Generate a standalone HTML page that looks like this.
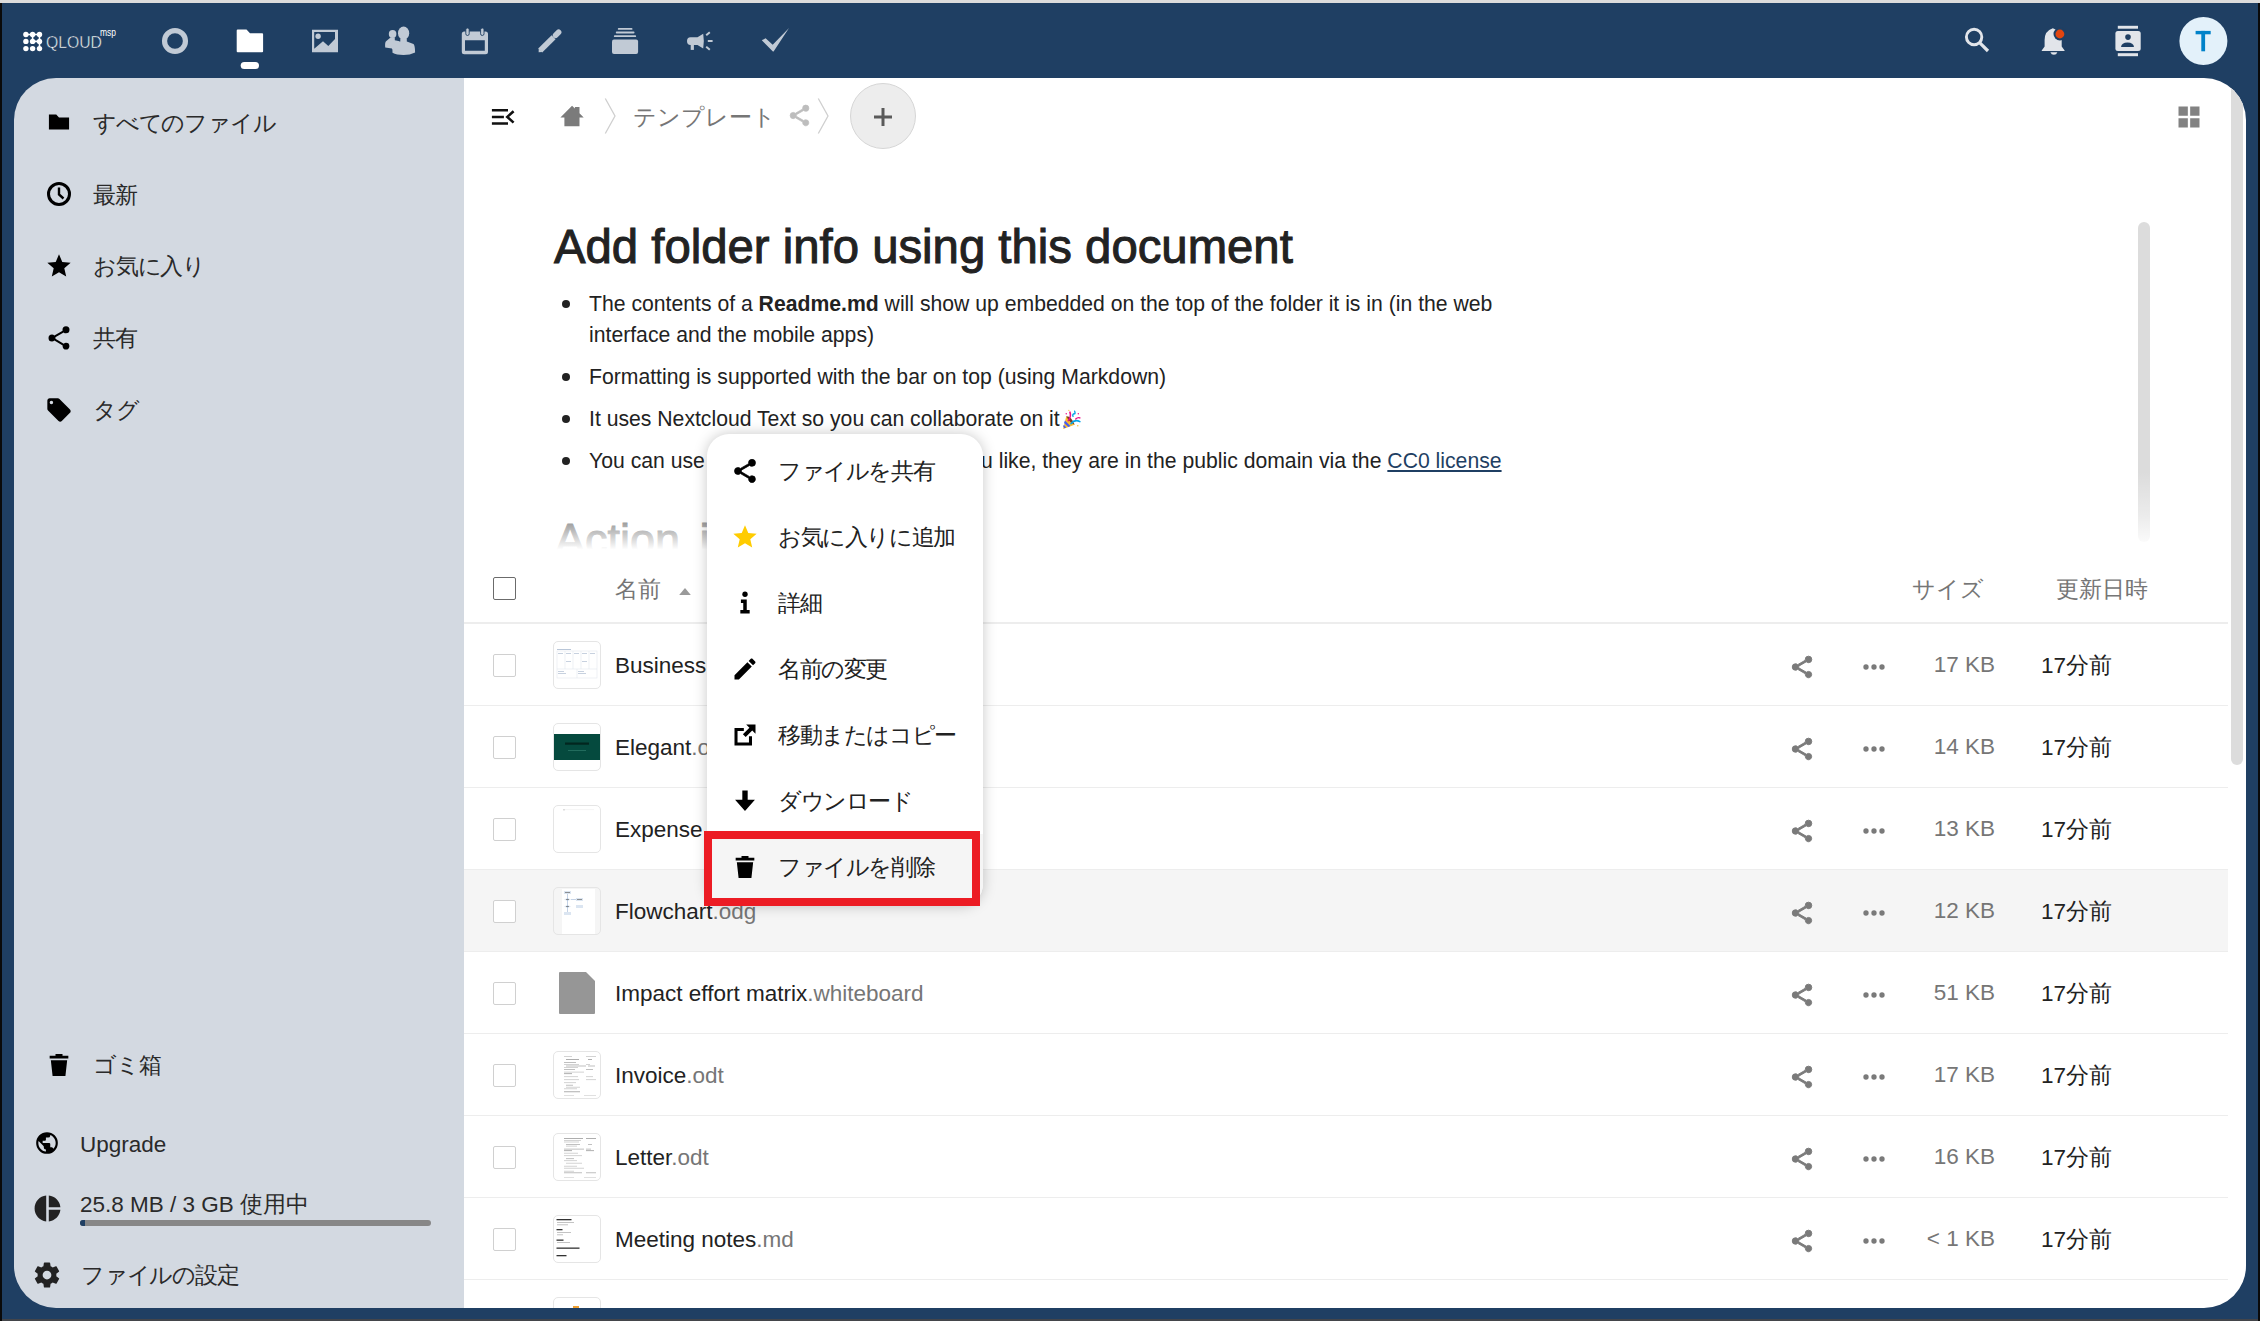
<!DOCTYPE html>
<html><head><meta charset="utf-8">
<style>
*{box-sizing:border-box;margin:0;padding:0}
html,body{width:2260px;height:1321px;overflow:hidden}
body{position:relative;background:#1f3f63;font-family:"Liberation Sans",sans-serif;color:#222}
.abs{position:absolute}
#topb{left:0;top:0;width:2260px;height:3px;background:#dcdcdc}
#leftb{left:0;top:3px;width:2px;height:1318px;background:#0a0a0a}
#rightb{left:2258px;top:3px;width:2px;height:1318px;background:#0a0a0a}
#botb{left:2px;top:1319px;width:2256px;height:2px;background:#43454a}
#side{left:14px;top:78px;width:450px;height:1230px;background:#d3d9e1;border-radius:42px 0 0 42px}
#main{left:464px;top:78px;width:1782px;height:1230px;background:#fff;border-radius:0 42px 42px 0;overflow:hidden}
.hic{position:absolute;top:26px;width:30px;height:30px}
.hic svg{width:30px;height:30px;fill:#c5cdd7}
svg{display:block}
.sitem{position:absolute;left:0;height:40px;width:450px}
.sitem svg{position:absolute;left:31px;top:6px;width:28px;height:28px;fill:#000}
.sitem span{position:absolute;left:79px;top:4.5px;font-size:22.5px;color:#2a2a2a;white-space:nowrap;letter-spacing:-1.2px}
.row{position:absolute;left:0;width:1764px;height:82px;border-top:1px solid #ededed}
.cb{position:absolute;left:29px;top:30px;width:23px;height:23px;border:1.5px solid #d0d0d0;border-radius:2px;background:#fff}
.thumb{position:absolute;left:89px;top:17px;width:48px;height:48px;border:1px solid #e5e5e5;border-radius:5px;background:#fff;overflow:hidden}
.fname{position:absolute;left:151px;top:29px;font-size:22.5px;color:#222;white-space:nowrap}
.ext{color:#767676}
.rshare{position:absolute;left:1325px;top:30px;width:26px;height:26px;fill:#7a7a7a;stroke:#7a7a7a;stroke-width:0.9}
.rdots{position:absolute;left:1394px;top:27px;width:32px;height:32px;fill:#7a7a7a}
.size{position:absolute;right:233px;top:28px;font-size:22.5px;color:#767676;white-space:nowrap}
.date{position:absolute;left:1577px;top:26px;font-size:22.5px;color:#222;white-space:nowrap}
.bul{position:absolute;left:125px;font-size:21.2px;color:#222;white-space:nowrap}
.dot{position:absolute;left:-27px;top:8px;width:8px;height:8px;border-radius:50%;background:#222}
.mi{position:absolute;left:0;width:277px;height:66px}
.mi svg{position:absolute;left:23.5px;top:19px;width:28px;height:28px;fill:#000}
.mi span{position:absolute;left:71px;top:17.5px;font-size:22.5px;color:#222;white-space:nowrap;letter-spacing:-1.4px}
</style></head><body>
<div id="topb" class="abs"></div>
<div id="leftb" class="abs"></div>
<div id="rightb" class="abs"></div>
<div id="botb" class="abs"></div>

<!-- header -->
<svg class="abs" style="left:0;top:0" width="2260" height="78" viewBox="0 0 2260 78">
<g fill="#fff">
<circle cx="25.9" cy="34.5" r="2.7"/><circle cx="32.6" cy="34.5" r="2.7"/><circle cx="39.5" cy="34.5" r="2.7"/>
<circle cx="25.9" cy="41.4" r="2.7"/><circle cx="32.6" cy="41.4" r="2.7"/><circle cx="39.5" cy="41.4" r="2.7"/>
<circle cx="25.9" cy="48.6" r="2.7"/><circle cx="32.6" cy="48.6" r="2.7"/><circle cx="39.5" cy="48.6" r="2.7"/>
</g>
<path d="M25.9 34.5H39.5V48.6M32.6 34.5V41.4H39.5" stroke="#fff" stroke-width="1.6" fill="none"/>
<text x="46" y="47.7" font-family="Liberation Sans" font-size="16.8" fill="#fff" stroke="#1f3f63" stroke-width="0.5" textLength="56" lengthAdjust="spacingAndGlyphs">QLOUD</text>
<text x="100" y="36" font-family="Liberation Sans" font-size="10" fill="#fff" textLength="16" lengthAdjust="spacingAndGlyphs">msp</text>

<circle cx="175" cy="41" r="10.45" fill="none" stroke="#c1cad5" stroke-width="5.2"/>

<path d="M237.7 29.6H246.5L250 33.3H262.1Q263.1 33.3 263.1 34.3V51.3Q263.1 52.3 262.1 52.3H237.7Q236.7 52.3 236.7 51.3V30.6Q236.7 29.6 237.7 29.6Z" fill="#fff"/>
<rect x="240.7" y="62" width="18.3" height="7.1" rx="3.55" fill="#fff"/>

<path d="M312 29.7H338V52.3H312Z M314.2 31.9V48.8L323 41.2L328.3 46.1L335 39V31.9Z" fill="#c1cad5" fill-rule="evenodd"/>
<circle cx="318.1" cy="36.2" r="2.7" fill="#c1cad5"/>

<g fill="#c1cad5">
<ellipse cx="392.6" cy="34" rx="3.8" ry="3.9"/>
<path d="M390.5 37.5H394.8V40.2L399.5 41.2L398 49.3H391.9L392 48.5L385.2 47.5Q384.8 43 385.8 41.6Z"/>
<ellipse cx="403.6" cy="33.2" rx="5.6" ry="6.6"/>
<path d="M400.3 38.5H406.8L406.8 41.6L413.5 44Q415 45 415.1 52.5Q410 55 403.5 55Q396.5 55 392.5 52.8L392.3 45Q393.3 42.5 400.3 41.6Z"/>
</g>

<path d="M464.3 31.6H485.5Q488 31.6 488 34.1V51.8Q488 54.3 485.5 54.3H464.3Q461.8 54.3 461.8 51.8V34.1Q461.8 31.6 464.3 31.6Z M465 40.2V50.7H484.8V40.2Z" fill="#c1cad5" fill-rule="evenodd"/>
<rect x="465.8" y="28" width="3.4" height="7.5" rx="1.7" fill="#c1cad5" stroke="#1f3f63" stroke-width="0.9"/>
<rect x="480.6" y="28" width="3.4" height="7.5" rx="1.7" fill="#c1cad5" stroke="#1f3f63" stroke-width="0.9"/>

<path d="M540.2 50.6L553.6 37.2" stroke="#c1cad5" stroke-width="5.6" stroke-linecap="butt"/>
<path d="M538.6 52.3L538.8 48.4L542.4 52.1Z" fill="#c1cad5"/>
<path d="M555.6 35.3L558.6 32.3" stroke="#c1cad5" stroke-width="5.6" stroke-linecap="round"/>

<g fill="#c1cad5">
<rect x="617.8" y="28" width="14.7" height="1.8" rx="0.9"/>
<rect x="615.8" y="31.6" width="18.7" height="1.9" rx="0.9"/>
<rect x="613.9" y="35.2" width="22.2" height="1.9" rx="0.9"/>
<rect x="612" y="39.5" width="26.1" height="14.5" rx="2"/>
</g>

<g fill="#c1cad5">
<path d="M690.5 37.2L697.5 37.2L703.2 33.7Q704.5 41 703.2 48.5L697.5 45L690.5 45Q687 45 687 41.1Q687 37.2 690.5 37.2Z"/>
<rect x="690.7" y="44" width="3.2" height="5.9"/>
</g>
<path d="M706.2 35.3L709.8 32.3M707.8 41H712.6M706.2 46.8L709.8 49.8" stroke="#c1cad5" stroke-width="2" stroke-linecap="butt"/>

<path d="M761.8 40.3L765.6 38.2L772.7 44.8L789 28.1L773.6 51.4L772.9 51.4Z" fill="#c1cad5"/>

<circle cx="1974.1" cy="37" r="7.7" fill="none" stroke="#e2e5ea" stroke-width="2.9"/>
<path d="M1979.6 42.6L1988 51" stroke="#e2e5ea" stroke-width="3.2"/>

<path d="M2052.8 28.3Q2044.6 31 2044.6 40V46.5L2041.7 50.5V51.1H2064.6V50.5L2061.7 46.5V40Q2061.7 31 2052.8 28.3Z" fill="#e2e5ea"/>
<path d="M2050.4 52.2H2057.4Q2056.5 54.8 2053.9 54.8Q2051.3 54.8 2050.4 52.2Z" fill="#e2e5ea"/>
<circle cx="2059.9" cy="34" r="6.4" fill="#1f3f63"/>
<circle cx="2059.9" cy="34" r="4.4" fill="#e2450f"/>

<rect x="2117.8" y="25.8" width="20.2" height="2.9" fill="#e2e5ea"/>
<rect x="2117.8" y="53.2" width="20.2" height="3" fill="#e2e5ea"/>
<rect x="2115.4" y="30.9" width="25.3" height="20.2" rx="2.5" fill="#e2e5ea"/>
<circle cx="2128" cy="37.1" r="2.8" fill="#1f3f63"/>
<path d="M2121 46.9Q2121.5 42.4 2127.5 42.4Q2133.5 42.4 2134 46.9Z" fill="#1f3f63"/>

<circle cx="2203.4" cy="41" r="24" fill="#e3f1fa"/>
<rect x="2195.6" y="30.9" width="15.1" height="3.4" fill="#0082c9"/>
<rect x="2201.3" y="30.9" width="3.8" height="20.4" fill="#0082c9"/>
</svg>

<div id="side" class="abs">
<div class="sitem" style="top:25px"><svg viewBox="0 0 24 24" style="left:34px;top:9.5px;width:22px;height:18px" preserveAspectRatio="none"><path d="M9,2H1V22H23V6H12L9,2Z"/></svg><span>すべてのファイル</span></div>
<div class="sitem" style="top:97px"><svg viewBox="0 0 28 28" style="left:30.7px;top:5.4px;width:28px;height:28px"><circle cx="14" cy="14" r="10.5" fill="none" stroke="#000" stroke-width="3"/><path d="M14 7.5V14.5L18.5 18.5" stroke="#000" stroke-width="2.4" fill="none"/></svg><span>最新</span></div>
<div class="sitem" style="top:168px"><svg viewBox="0 0 24 24"><path d="M12,17.27L18.18,21L16.54,13.97L22,9.24L14.81,8.62L12,2L9.19,8.62L2,9.24L7.45,13.97L5.82,21L12,17.27Z"/></svg><span>お気に入り</span></div>
<div class="sitem" style="top:240px"><svg viewBox="0 0 24 24"><path d="M18,16.08C17.24,16.08 16.56,16.38 16.04,16.85L8.91,12.7C8.96,12.47 9,12.24 9,12C9,11.76 8.96,11.53 8.91,11.3L15.96,7.19C16.5,7.69 17.21,8 18,8A3,3 0 0,0 21,5A3,3 0 0,0 18,2A3,3 0 0,0 15,5C15,5.24 15.04,5.47 15.09,5.7L8.04,9.81C7.5,9.31 6.79,9 6,9A3,3 0 0,0 3,12A3,3 0 0,0 6,15C6.79,15 7.5,14.69 8.04,14.19L15.16,18.34C15.11,18.550 15.08,18.77 15.08,19C15.08,20.61 16.39,21.91 18,21.910C19.61,21.91 20.92,20.61 20.92,19A2.92,2.92 0 0,0 18,16.08Z"/></svg><span>共有</span></div>
<div class="sitem" style="top:312px"><svg viewBox="0 0 24 24"><path d="M5.5,7A1.5,1.5 0 0,1 4,5.5A1.5,1.5 0 0,1 5.5,4A1.5,1.5 0 0,1 7,5.5A1.5,1.5 0 0,1 5.5,7M21.41,11.58L12.41,2.58C12.05,2.22 11.55,2 11,2H4C2.89,2 2,2.89 2,4V11C2,11.55 2.22,12.05 2.59,12.410L11.58,21.41C11.95,21.77 12.45,22 13,22C13.55,22 14.05,21.77 14.41,21.41L21.41,14.41C21.78,14.05 22,13.55 22,13C22,12.44 21.77,11.94 21.41,11.58Z"/></svg><span>タグ</span></div>

<div class="sitem" style="top:967px"><svg viewBox="0 0 24 24"><path d="M9,2.5H15V4H20V6.5H4V4H9Z M5,8H19L17.5,21.5H6.5Z"/></svg><span>ゴミ箱</span></div>
<div class="sitem" style="top:1049px"><svg viewBox="0 0 24 24" style="left:20px;top:3px;width:26px;height:26px"><path d="M17.9,17.39C17.64,16.59 16.89,16 16,16H15V13A1,1 0 0,0 14,12H8V10H10A1,1 0 0,0 11,9V7H13A2,2 0 0,0 15,5V4.59C17.93,5.77 20,8.64 20,12C20,14.08 19.2,15.97 17.9,17.39M11,19.93C7.05,19.440 4,16.08 4,12C4,11.38 4.08,10.78 4.21,10.21L9,15V16A2,2 0 0,0 11,18M12,2A10,10 0 0,0 2,12A10,10 0 0,0 12,22A10,10 0 0,0 22,12A10,10 0 0,0 12,2Z"/></svg><span style="left:66px;letter-spacing:0">Upgrade</span></div>
<div class="sitem" style="top:1110px"><svg viewBox="0 0 24 24" style="left:17.5px;top:4.5px;width:31px;height:31px;fill:#222"><path d="M11,2V22C5.9,21.5 2,17.2 2,12C2,6.8 5.9,2.5 11,2M13,2V11H22C21.5,6.2 17.8,2.5 13,2M13,13V22C17.7,21.5 21.5,17.8 22,13H13Z"/></svg><span style="left:66px;top:1px;letter-spacing:0">25.8 MB / 3 GB 使用中</span>
<div class="abs" style="left:66px;top:32px;width:351px;height:6px;border-radius:3px;background:#878787"><div class="abs" style="left:0;top:0;width:5px;height:6px;border-radius:3px 0 0 3px;background:#1f3f63"></div></div></div>
<div class="sitem" style="top:1177px"><svg viewBox="0 0 24 24" style="left:18px;top:5px;width:30px;height:30px"><path d="M12,15.5A3.5,3.5 0 0,1 8.5,12A3.5,3.5 0 0,1 12,8.5A3.5,3.5 0 0,1 15.5,12A3.5,3.5 0 0,1 12,15.5M19.43,12.97C19.47,12.65 19.5,12.33 19.5,12C19.5,11.67 19.47,11.34 19.43,11L21.54,9.37C21.73,9.22 21.78,8.95 21.66,8.73L19.66,5.27C19.54,5.05 19.27,4.96 19.05,5.05L16.56,6.05C16.04,5.66 15.5,5.32 14.87,5.07L14.5,2.42C14.46,2.18 14.25,2 14,2H10C9.75,2 9.54,2.18 9.5,2.42L9.13,5.07C8.5,5.32 7.96,5.66 7.44,6.05L4.95,5.05C4.73,4.96 4.46,5.05 4.34,5.27L2.34,8.73C2.21,8.95 2.27,9.22 2.46,9.37L4.57,11C4.53,11.34 4.5,11.67 4.5,12C4.5,12.33 4.53,12.65 4.57,12.97L2.46,14.63C2.27,14.78 2.21,15.05 2.34,15.27L4.34,18.73C4.46,18.95 4.73,19.03 4.95,18.95L7.44,17.94C7.96,18.34 8.5,18.68 9.13,18.93L9.5,21.58C9.54,21.82 9.75,22 10,22H14C14.25,22 14.46,21.82 14.5,21.58L14.87,18.93C15.5,18.67 16.04,18.34 16.56,17.94L19.05,18.950C19.27,19.03 19.54,18.95 19.66,18.73L21.66,15.27C21.78,15.05 21.73,14.78 21.54,14.63L19.43,12.97Z" fill="#222"/></svg><span style="left:67px">ファイルの設定</span></div>
</div>
<div id="main" class="abs">
<svg class="abs" style="left:0;top:0" width="140" height="78" viewBox="0 0 140 78">
<path d="M27.9 32.35H44M27.9 38.9H39.9M27.9 45.45H44" stroke="#111" stroke-width="2.5"/>
<path d="M49.6 33.2L43.3 38.9L49.6 44.6" stroke="#111" stroke-width="2.6" fill="none"/>
<path d="M96.4 39.6L108.05 27.7L110.9 30.6V29H115.5V35.3L119.7 39.6H115.5V48.2H100.4V39.6Z" fill="#7b7b7b"/>
</svg>

<svg class="abs" viewBox="0 0 12 40" style="left:140px;top:20px;width:12px;height:36px" preserveAspectRatio="none"><path d="M1.3 0.5L11 20L1.3 39.5" stroke="#cfcfcf" stroke-width="1.3" fill="none"/></svg>
<div class="abs" style="left:169px;top:24px;font-size:22.5px;color:#767676;white-space:nowrap">テンプレート</div>
<svg class="abs" viewBox="0 0 24 24" style="left:323px;top:25px;width:25px;height:25px"><path stroke="#bdbdbd" stroke-width="0.7" d="M18,16.08C17.24,16.08 16.56,16.38 16.04,16.85L8.91,12.7C8.96,12.47 9,12.24 9,12C9,11.76 8.96,11.53 8.91,11.3L15.96,7.19C16.5,7.69 17.21,8 18,8A3,3 0 0,0 21,5A3,3 0 0,0 18,2A3,3 0 0,0 15,5C15,5.24 15.04,5.47 15.09,5.7L8.04,9.81C7.5,9.31 6.79,9 6,9A3,3 0 0,0 3,12A3,3 0 0,0 6,15C6.79,15 7.5,14.69 8.04,14.19L15.16,18.34C15.11,18.55 15.08,18.77 15.08,19C15.08,20.61 16.39,21.91 18,21.91C19.61,21.91 20.92,20.61 20.92,19A2.92,2.92 0 0,0 18,16.08Z" fill="#bdbdbd"/></svg>
<svg class="abs" viewBox="0 0 12 40" style="left:353px;top:20px;width:12px;height:36px" preserveAspectRatio="none"><path d="M1.3 0.5L11 20L1.3 39.5" stroke="#cfcfcf" stroke-width="1.3" fill="none"/></svg>
<div class="abs" style="left:386px;top:5px;width:66px;height:66px;border-radius:50%;background:#ededed;border:1px solid #d6d6d6"></div>
<svg class="abs" style="left:400px;top:28px" width="38" height="22" viewBox="0 0 38 22"><path d="M19 2V20M10 11H28" stroke="#5a5a5a" stroke-width="3"/></svg>
<svg class="abs" viewBox="0 0 24 24" style="left:1711px;top:25px;width:28px;height:28px"><path d="M3,11H11V3H3M3,21H11V13H3M13,21H21V13H13M13,3V11H21V3" fill="#828282"/></svg>

<div id="readme" class="abs" style="left:0;top:122px;width:1700px;height:352px;overflow:hidden">
<div class="abs" style="left:1674px;top:22px;width:12px;height:320px;border-radius:6px;background:#dcdcdc"></div>
<div class="abs" style="left:90px;top:18.6px;font-size:47.3px;font-weight:normal;color:#222;white-space:nowrap;-webkit-text-stroke:1px #222">Add folder info using this document</div>
<div class="bul" style="top:92px"><span class="dot"></span>The contents of a <b>Readme.md</b> will show up embedded on the top of the folder it is in (in the web</div>
<div class="bul" style="top:123px;">interface and the mobile apps)</div>
<div class="bul" style="top:165px"><span class="dot"></span>Formatting is supported with the bar on top (using Markdown)</div>
<div class="bul" style="top:207px"><span class="dot"></span>It uses Nextcloud Text so you can collaborate on it</div>
<svg class="abs" style="left:597px;top:209px" width="21" height="21" viewBox="0 0 40 40"><path d="M10 14L26 30L4 38Z" fill="#fbbd2e"/><path d="M7.5 22L18 32.5L14 34.5L5.8 26.5ZM5 30L10 35L6.5 36.5L4.2 34Z" fill="#4a5cf0"/><path d="M10 14Q19 13 26 30Q16 26 10 14Z" fill="#7a3e22"/><path d="M14 22Q20 14 17 6" stroke="#ec0f8b" stroke-width="3" fill="none" stroke-linecap="round"/><path d="M19 28Q26 19 36 24" stroke="#05a4e8" stroke-width="3" fill="none" stroke-linecap="round"/><path d="M23 14Q21 10 25 9Q28 10 26 4" stroke="#05a4e8" stroke-width="2.6" fill="none" stroke-linecap="round"/><path d="M28 19Q32 15 36 17" stroke="#ec0f8b" stroke-width="2.6" fill="none" stroke-linecap="round"/><circle cx="10" cy="9" r="1.4" fill="#ec0f8b"/><circle cx="33" cy="9" r="1.4" fill="#ec0f8b"/><circle cx="15" cy="2.5" r="1.2" fill="#fbbd2e"/><circle cx="32" cy="32" r="1.3" fill="#fbbd2e"/></svg>
<div class="bul" style="top:249px"><span class="dot"></span>You can use a</div><div class="bul" style="top:249px;left:517px">u like, they are in the public domain via the <u style="color:#1f3f63">CC0 license</u></div>
<div class="abs" style="left:91px;top:314px;font-size:45px;font-weight:normal;color:#222;white-space:nowrap;-webkit-text-stroke:1px #222;word-spacing:7px">Action items</div>
<div class="abs" style="left:0;top:272px;width:1700px;height:80px;background:linear-gradient(rgba(255,255,255,0) 0%,rgba(255,255,255,0.45) 55%,#fff 97%)"></div>
</div>


<div class="abs" style="left:29px;top:499px;width:23px;height:23px;border:1.5px solid #6b6b6b;border-radius:2px"></div>
<div class="abs" style="left:151px;top:496px;font-size:22.5px;color:#767676">名前</div>
<svg class="abs" viewBox="0 0 10 6" style="left:215px;top:510px;width:12px;height:7px"><path d="M0 6L5 0L10 6Z" fill="#9a9a9a"/></svg>
<div class="abs" style="left:1448px;top:496px;font-size:22.5px;color:#767676">サイズ</div>
<div class="abs" style="left:1592px;top:496px;font-size:22.5px;color:#767676">更新日時</div>
<div class="abs" style="left:0;top:544px;width:1764px;height:1px;background:#ededed"></div>
<div class="row" style="top:545px;">
<div class="cb"></div><div class="thumb"><svg width="46" height="46" viewBox="0 0 46 46"><g stroke="#e3e8ef" stroke-width="0.6" fill="none"><rect x="3" y="9" width="40" height="27"/><path d="M11 9V27M19 9V27M27 9V27M35 9V27M3 27H43M23 27V36"/></g><g fill="#b9c6d8"><rect x="3" y="7" width="14" height="1"/><rect x="4" y="11" width="5" height="0.8"/><rect x="12" y="11" width="5" height="0.8"/><rect x="20" y="11" width="5" height="0.8"/><rect x="28" y="11" width="5" height="0.8"/><rect x="36" y="11" width="5" height="0.8"/><rect x="12" y="19" width="5" height="0.8"/><rect x="28" y="19" width="5" height="0.8"/><rect x="4" y="29" width="6" height="0.8"/><rect x="24" y="29" width="6" height="0.8"/><rect x="4" y="31" width="8" height="0.8"/><rect x="24" y="31" width="8" height="0.8"/></g></svg></div><div class="fname">Business model canvas<span class="ext">.odp</span></div>
<svg class="rshare" viewBox="0 0 24 24"><path d="M18,16.08C17.24,16.08 16.56,16.38 16.04,16.85L8.91,12.7C8.96,12.47 9,12.24 9,12C9,11.76 8.96,11.53 8.91,11.3L15.96,7.19C16.5,7.69 17.21,8 18,8A3,3 0 0,0 21,5A3,3 0 0,0 18,2A3,3 0 0,0 15,5C15,5.24 15.04,5.47 15.09,5.7L8.04,9.81C7.5,9.31 6.79,9 6,9A3,3 0 0,0 3,12A3,3 0 0,0 6,15C6.79,15 7.5,14.69 8.04,14.19L15.16,18.34C15.11,18.55 15.08,18.77 15.08,19C15.08,20.61 16.39,21.91 18,21.91C19.61,21.91 20.92,20.61 20.92,19A2.92,2.92 0 0,0 18,16.08Z"/></svg><svg class="rdots" viewBox="0 0 24 24"><path d="M16,12A2,2 0 0,1 18,10A2,2 0 0,1 20,12A2,2 0 0,1 18,14A2,2 0 0,1 16,12M10,12A2,2 0 0,1 12,10A2,2 0 0,1 14,12A2,2 0 0,1 12,14A2,2 0 0,1 10,12M4,12A2,2 0 0,1 6,10A2,2 0 0,1 8,12A2,2 0 0,1 6,14A2,2 0 0,1 4,12Z"/></svg>
<div class="size">17 KB</div><div class="date">17分前</div></div>
<div class="row" style="top:627px;">
<div class="cb"></div><div class="thumb"><svg width="46" height="46" viewBox="0 0 46 46"><rect x="0" y="10" width="46" height="26" fill="#054a3e"/><rect x="11" y="18.5" width="24" height="2.2" fill="#02261f"/><rect x="14" y="26" width="18" height="0.8" fill="#2a7566"/></svg></div><div class="fname">Elegant<span class="ext">.odp</span></div>
<svg class="rshare" viewBox="0 0 24 24"><path d="M18,16.08C17.24,16.08 16.56,16.38 16.04,16.85L8.91,12.7C8.96,12.47 9,12.24 9,12C9,11.76 8.96,11.53 8.91,11.3L15.96,7.19C16.5,7.69 17.21,8 18,8A3,3 0 0,0 21,5A3,3 0 0,0 18,2A3,3 0 0,0 15,5C15,5.24 15.04,5.47 15.09,5.7L8.04,9.81C7.5,9.31 6.79,9 6,9A3,3 0 0,0 3,12A3,3 0 0,0 6,15C6.79,15 7.5,14.69 8.04,14.19L15.16,18.34C15.11,18.55 15.08,18.77 15.08,19C15.08,20.61 16.39,21.91 18,21.91C19.61,21.91 20.92,20.61 20.92,19A2.92,2.92 0 0,0 18,16.08Z"/></svg><svg class="rdots" viewBox="0 0 24 24"><path d="M16,12A2,2 0 0,1 18,10A2,2 0 0,1 20,12A2,2 0 0,1 18,14A2,2 0 0,1 16,12M10,12A2,2 0 0,1 12,10A2,2 0 0,1 14,12A2,2 0 0,1 12,14A2,2 0 0,1 10,12M4,12A2,2 0 0,1 6,10A2,2 0 0,1 8,12A2,2 0 0,1 6,14A2,2 0 0,1 4,12Z"/></svg>
<div class="size">14 KB</div><div class="date">17分前</div></div>
<div class="row" style="top:709px;">
<div class="cb"></div><div class="thumb"><svg width="46" height="46" viewBox="0 0 46 46"><rect x="10" y="3.5" width="30" height="0.6" fill="#eeeeee"/><rect x="9" y="3" width="2" height="1.5" fill="#dddddd"/></svg></div><div class="fname">Expense report<span class="ext">.ods</span></div>
<svg class="rshare" viewBox="0 0 24 24"><path d="M18,16.08C17.24,16.08 16.56,16.38 16.04,16.85L8.91,12.7C8.96,12.47 9,12.24 9,12C9,11.76 8.96,11.53 8.91,11.3L15.96,7.19C16.5,7.69 17.21,8 18,8A3,3 0 0,0 21,5A3,3 0 0,0 18,2A3,3 0 0,0 15,5C15,5.24 15.04,5.47 15.09,5.7L8.04,9.81C7.5,9.31 6.79,9 6,9A3,3 0 0,0 3,12A3,3 0 0,0 6,15C6.79,15 7.5,14.69 8.04,14.19L15.16,18.34C15.11,18.55 15.08,18.77 15.08,19C15.08,20.61 16.39,21.91 18,21.91C19.61,21.91 20.92,20.61 20.92,19A2.92,2.92 0 0,0 18,16.08Z"/></svg><svg class="rdots" viewBox="0 0 24 24"><path d="M16,12A2,2 0 0,1 18,10A2,2 0 0,1 20,12A2,2 0 0,1 18,14A2,2 0 0,1 16,12M10,12A2,2 0 0,1 12,10A2,2 0 0,1 14,12A2,2 0 0,1 12,14A2,2 0 0,1 10,12M4,12A2,2 0 0,1 6,10A2,2 0 0,1 8,12A2,2 0 0,1 6,14A2,2 0 0,1 4,12Z"/></svg>
<div class="size">13 KB</div><div class="date">17分前</div></div>
<div class="row" style="top:791px;background:#f5f5f5;">
<div class="cb"></div><div class="thumb" style="background:#f5f5f5"><svg width="46" height="46" viewBox="0 0 46 46"><rect x="8" y="1" width="33" height="45" fill="#fff"/><g fill="#dbe5f1"><rect x="10" y="3" width="7" height="3"/><rect x="22" y="10" width="7" height="3"/><rect x="22" y="17" width="7" height="3"/><rect x="10" y="24" width="7" height="3"/><path d="M10 11.5L13.5 10L17 11.5L13.5 13Z"/><path d="M10 18.5L13.5 17L17 18.5L13.5 20Z"/></g><path d="M13.5 6V24M17 11.5H22" stroke="#8aa6cc" stroke-width="0.5"/><g fill="#555"><rect x="11" y="4.2" width="5" height="0.6"/><rect x="12" y="11.2" width="3" height="0.6"/><rect x="12" y="18.2" width="3" height="0.6"/><rect x="23" y="11.2" width="5" height="0.6"/></g></svg></div><div class="fname">Flowchart<span class="ext">.odg</span></div>
<svg class="rshare" viewBox="0 0 24 24"><path d="M18,16.08C17.24,16.08 16.56,16.38 16.04,16.85L8.91,12.7C8.96,12.47 9,12.24 9,12C9,11.76 8.96,11.53 8.91,11.3L15.96,7.19C16.5,7.69 17.21,8 18,8A3,3 0 0,0 21,5A3,3 0 0,0 18,2A3,3 0 0,0 15,5C15,5.24 15.04,5.47 15.09,5.7L8.04,9.81C7.5,9.31 6.79,9 6,9A3,3 0 0,0 3,12A3,3 0 0,0 6,15C6.79,15 7.5,14.69 8.04,14.19L15.16,18.34C15.11,18.55 15.08,18.77 15.08,19C15.08,20.61 16.39,21.91 18,21.91C19.61,21.91 20.92,20.61 20.92,19A2.92,2.92 0 0,0 18,16.08Z"/></svg><svg class="rdots" viewBox="0 0 24 24"><path d="M16,12A2,2 0 0,1 18,10A2,2 0 0,1 20,12A2,2 0 0,1 18,14A2,2 0 0,1 16,12M10,12A2,2 0 0,1 12,10A2,2 0 0,1 14,12A2,2 0 0,1 12,14A2,2 0 0,1 10,12M4,12A2,2 0 0,1 6,10A2,2 0 0,1 8,12A2,2 0 0,1 6,14A2,2 0 0,1 4,12Z"/></svg>
<div class="size">12 KB</div><div class="date">17分前</div></div>
<div class="row" style="top:873px;">
<div class="cb"></div><div class="thumb" style="border:none;background:transparent"><svg viewBox="0 0 48 48" style="width:48px;height:48px"><path d="M6 7Q6 6 7 6H33L42 15V47Q42 48 41 48H7Q6 48 6 47Z" fill="#969696" transform="translate(0,-3)"/></svg></div><div class="fname">Impact effort matrix<span class="ext">.whiteboard</span></div>
<svg class="rshare" viewBox="0 0 24 24"><path d="M18,16.08C17.24,16.08 16.56,16.38 16.04,16.85L8.91,12.7C8.96,12.47 9,12.24 9,12C9,11.76 8.96,11.53 8.91,11.3L15.96,7.19C16.5,7.69 17.21,8 18,8A3,3 0 0,0 21,5A3,3 0 0,0 18,2A3,3 0 0,0 15,5C15,5.24 15.04,5.47 15.09,5.7L8.04,9.81C7.5,9.31 6.79,9 6,9A3,3 0 0,0 3,12A3,3 0 0,0 6,15C6.79,15 7.5,14.69 8.04,14.19L15.16,18.34C15.11,18.55 15.08,18.77 15.08,19C15.08,20.61 16.39,21.91 18,21.91C19.61,21.91 20.92,20.61 20.92,19A2.92,2.92 0 0,0 18,16.08Z"/></svg><svg class="rdots" viewBox="0 0 24 24"><path d="M16,12A2,2 0 0,1 18,10A2,2 0 0,1 20,12A2,2 0 0,1 18,14A2,2 0 0,1 16,12M10,12A2,2 0 0,1 12,10A2,2 0 0,1 14,12A2,2 0 0,1 12,14A2,2 0 0,1 10,12M4,12A2,2 0 0,1 6,10A2,2 0 0,1 8,12A2,2 0 0,1 6,14A2,2 0 0,1 4,12Z"/></svg>
<div class="size">51 KB</div><div class="date">17分前</div></div>
<div class="row" style="top:955px;">
<div class="cb"></div><div class="thumb"><svg width="46" height="46" viewBox="0 0 46 46"><rect x="10" y="4" width="8" height="0.8" fill="#c8c8c8"/><rect x="32" y="4" width="10" height="0.8" fill="#c8c8c8"/><rect x="12" y="7" width="13" height="0.8" fill="#9a9a9a"/><rect x="34" y="7" width="4" height="0.8" fill="#9a9a9a"/><rect x="10" y="10" width="12" height="0.8" fill="#b0b0b0"/><rect x="10" y="12" width="15" height="0.8" fill="#c8c8c8"/><rect x="32" y="12" width="4" height="0.8" fill="#c8c8c8"/><rect x="12" y="13.6" width="20" height="0.8" fill="#b0b0b0"/><rect x="34" y="13.6" width="7" height="0.8" fill="#b0b0b0"/><rect x="10" y="15.2" width="14" height="0.8" fill="#c8c8c8"/><rect x="10" y="17.2" width="11" height="0.8" fill="#b0b0b0"/><rect x="32" y="17.2" width="7" height="0.8" fill="#b0b0b0"/><rect x="10" y="19.7" width="20" height="0.8" fill="#c8c8c8"/><rect x="10" y="21.3" width="8" height="0.8" fill="#9a9a9a"/><rect x="10" y="24.3" width="14" height="0.8" fill="#c8c8c8"/><rect x="32" y="24.3" width="7" height="0.8" fill="#c8c8c8"/><rect x="10" y="27.3" width="15" height="0.8" fill="#c8c8c8"/><rect x="32" y="27.3" width="10" height="0.8" fill="#c8c8c8"/><rect x="10" y="30.3" width="12" height="0.8" fill="#c8c8c8"/><rect x="12" y="32.8" width="7" height="0.8" fill="#b0b0b0"/><rect x="12" y="34.8" width="14" height="0.8" fill="#c8c8c8"/><rect x="10" y="36.4" width="13" height="0.8" fill="#c8c8c8"/><rect x="10" y="39.4" width="16" height="0.8" fill="#9a9a9a"/><rect x="10" y="43" width="10" height="0.6" fill="#ccc"/><rect x="30" y="43" width="12" height="0.6" fill="#ccc"/></svg></div><div class="fname">Invoice<span class="ext">.odt</span></div>
<svg class="rshare" viewBox="0 0 24 24"><path d="M18,16.08C17.24,16.08 16.56,16.38 16.04,16.85L8.91,12.7C8.96,12.47 9,12.24 9,12C9,11.76 8.96,11.53 8.91,11.3L15.96,7.19C16.5,7.69 17.21,8 18,8A3,3 0 0,0 21,5A3,3 0 0,0 18,2A3,3 0 0,0 15,5C15,5.24 15.04,5.47 15.09,5.7L8.04,9.81C7.5,9.31 6.79,9 6,9A3,3 0 0,0 3,12A3,3 0 0,0 6,15C6.79,15 7.5,14.69 8.04,14.19L15.16,18.34C15.11,18.55 15.08,18.77 15.08,19C15.08,20.61 16.39,21.91 18,21.91C19.61,21.91 20.92,20.61 20.92,19A2.92,2.92 0 0,0 18,16.08Z"/></svg><svg class="rdots" viewBox="0 0 24 24"><path d="M16,12A2,2 0 0,1 18,10A2,2 0 0,1 20,12A2,2 0 0,1 18,14A2,2 0 0,1 16,12M10,12A2,2 0 0,1 12,10A2,2 0 0,1 14,12A2,2 0 0,1 12,14A2,2 0 0,1 10,12M4,12A2,2 0 0,1 6,10A2,2 0 0,1 8,12A2,2 0 0,1 6,14A2,2 0 0,1 4,12Z"/></svg>
<div class="size">17 KB</div><div class="date">17分前</div></div>
<div class="row" style="top:1037px;">
<div class="cb"></div><div class="thumb"><svg width="46" height="46" viewBox="0 0 46 46"><rect x="10" y="4" width="19" height="0.8" fill="#9a9a9a"/><rect x="32" y="4" width="10" height="0.8" fill="#9a9a9a"/><rect x="10" y="6" width="17" height="0.8" fill="#c8c8c8"/><rect x="10" y="7.6" width="15" height="0.8" fill="#c8c8c8"/><rect x="12" y="10.1" width="14" height="0.8" fill="#b0b0b0"/><rect x="34" y="10.1" width="4" height="0.8" fill="#b0b0b0"/><rect x="12" y="11.7" width="11" height="0.8" fill="#c8c8c8"/><rect x="10" y="14.7" width="20" height="0.8" fill="#b0b0b0"/><rect x="32" y="14.7" width="5" height="0.8" fill="#b0b0b0"/><rect x="10" y="16.3" width="8" height="0.8" fill="#9a9a9a"/><rect x="32" y="16.3" width="8" height="0.8" fill="#9a9a9a"/><rect x="10" y="18.8" width="14" height="0.8" fill="#c8c8c8"/><rect x="10" y="21.3" width="18" height="0.8" fill="#c8c8c8"/><rect x="12" y="24.3" width="8" height="0.8" fill="#b0b0b0"/><rect x="10" y="26.3" width="13" height="0.8" fill="#c8c8c8"/><rect x="12" y="28.8" width="16" height="0.8" fill="#c8c8c8"/><rect x="10" y="31.8" width="13" height="0.8" fill="#c8c8c8"/><rect x="10" y="33.8" width="20" height="0.8" fill="#c8c8c8"/><rect x="10" y="36.8" width="10" height="0.8" fill="#c8c8c8"/><rect x="10" y="38.4" width="18" height="0.8" fill="#b0b0b0"/><rect x="32" y="38.4" width="10" height="0.8" fill="#b0b0b0"/><rect x="10" y="43" width="10" height="0.6" fill="#ccc"/><rect x="30" y="43" width="12" height="0.6" fill="#ccc"/></svg></div><div class="fname">Letter<span class="ext">.odt</span></div>
<svg class="rshare" viewBox="0 0 24 24"><path d="M18,16.08C17.24,16.08 16.56,16.38 16.04,16.85L8.91,12.7C8.96,12.47 9,12.24 9,12C9,11.76 8.96,11.53 8.91,11.3L15.96,7.19C16.5,7.69 17.21,8 18,8A3,3 0 0,0 21,5A3,3 0 0,0 18,2A3,3 0 0,0 15,5C15,5.24 15.04,5.47 15.09,5.7L8.04,9.81C7.5,9.31 6.79,9 6,9A3,3 0 0,0 3,12A3,3 0 0,0 6,15C6.79,15 7.5,14.69 8.04,14.19L15.16,18.34C15.11,18.55 15.08,18.77 15.08,19C15.08,20.61 16.39,21.91 18,21.91C19.61,21.91 20.92,20.61 20.92,19A2.92,2.92 0 0,0 18,16.08Z"/></svg><svg class="rdots" viewBox="0 0 24 24"><path d="M16,12A2,2 0 0,1 18,10A2,2 0 0,1 20,12A2,2 0 0,1 18,14A2,2 0 0,1 16,12M10,12A2,2 0 0,1 12,10A2,2 0 0,1 14,12A2,2 0 0,1 12,14A2,2 0 0,1 10,12M4,12A2,2 0 0,1 6,10A2,2 0 0,1 8,12A2,2 0 0,1 6,14A2,2 0 0,1 4,12Z"/></svg>
<div class="size">16 KB</div><div class="date">17分前</div></div>
<div class="row" style="top:1119px;">
<div class="cb"></div><div class="thumb"><svg width="46" height="46" viewBox="0 0 46 46"><g fill="#333"><rect x="2.5" y="3" width="15" height="1.3"/><rect x="2.5" y="13" width="6" height="1.3"/><rect x="2.5" y="23.5" width="7" height="1.3"/><rect x="2.5" y="31.5" width="23" height="1.3"/><rect x="2.5" y="39" width="10" height="1.3"/></g><g fill="#aaa"><rect x="3" y="6" width="17" height="0.7"/><rect x="3" y="8.5" width="11" height="0.7"/><rect x="3" y="16" width="14" height="0.7"/><rect x="3" y="18.5" width="6" height="0.7"/><rect x="3" y="26" width="13" height="0.7"/></g></svg></div><div class="fname">Meeting notes<span class="ext">.md</span></div>
<svg class="rshare" viewBox="0 0 24 24"><path d="M18,16.08C17.24,16.08 16.56,16.38 16.04,16.85L8.91,12.7C8.96,12.47 9,12.24 9,12C9,11.76 8.96,11.53 8.91,11.3L15.96,7.19C16.5,7.69 17.21,8 18,8A3,3 0 0,0 21,5A3,3 0 0,0 18,2A3,3 0 0,0 15,5C15,5.24 15.04,5.47 15.09,5.7L8.04,9.81C7.5,9.31 6.79,9 6,9A3,3 0 0,0 3,12A3,3 0 0,0 6,15C6.79,15 7.5,14.69 8.04,14.19L15.16,18.34C15.11,18.55 15.08,18.77 15.08,19C15.08,20.61 16.39,21.91 18,21.91C19.61,21.91 20.92,20.61 20.92,19A2.92,2.92 0 0,0 18,16.08Z"/></svg><svg class="rdots" viewBox="0 0 24 24"><path d="M16,12A2,2 0 0,1 18,10A2,2 0 0,1 20,12A2,2 0 0,1 18,14A2,2 0 0,1 16,12M10,12A2,2 0 0,1 12,10A2,2 0 0,1 14,12A2,2 0 0,1 12,14A2,2 0 0,1 10,12M4,12A2,2 0 0,1 6,10A2,2 0 0,1 8,12A2,2 0 0,1 6,14A2,2 0 0,1 4,12Z"/></svg>
<div class="size">< 1 KB</div><div class="date">17分前</div></div>
<div class="row" style="top:1201px;">
<div class="cb"></div><div class="thumb"><svg width="46" height="46" viewBox="0 0 46 46"><rect x="19" y="8" width="6" height="2" fill="#f0a030"/></svg></div><div class="fname">Mind map<span class="ext">.odg</span></div>
<svg class="rshare" viewBox="0 0 24 24"><path d="M18,16.08C17.24,16.08 16.56,16.38 16.04,16.85L8.91,12.7C8.96,12.47 9,12.24 9,12C9,11.76 8.96,11.53 8.91,11.3L15.96,7.19C16.5,7.69 17.21,8 18,8A3,3 0 0,0 21,5A3,3 0 0,0 18,2A3,3 0 0,0 15,5C15,5.24 15.04,5.47 15.09,5.7L8.04,9.81C7.5,9.31 6.79,9 6,9A3,3 0 0,0 3,12A3,3 0 0,0 6,15C6.79,15 7.5,14.69 8.04,14.19L15.16,18.34C15.11,18.55 15.08,18.77 15.08,19C15.08,20.61 16.39,21.91 18,21.91C19.61,21.91 20.92,20.61 20.92,19A2.92,2.92 0 0,0 18,16.08Z"/></svg><svg class="rdots" viewBox="0 0 24 24"><path d="M16,12A2,2 0 0,1 18,10A2,2 0 0,1 20,12A2,2 0 0,1 18,14A2,2 0 0,1 16,12M10,12A2,2 0 0,1 12,10A2,2 0 0,1 14,12A2,2 0 0,1 12,14A2,2 0 0,1 10,12M4,12A2,2 0 0,1 6,10A2,2 0 0,1 8,12A2,2 0 0,1 6,14A2,2 0 0,1 4,12Z"/></svg>
<div class="size"></div><div class="date">17分前</div></div>
<div class="abs" style="left:1767px;top:0;width:12px;height:687px;border-radius:6px;background:#dcdcdc"></div>
</div>
<div id="menu" class="abs" style="left:707px;top:434px;width:276px;height:472px;background:#fff;border-radius:22px;box-shadow:0 0 14px rgba(0,0,0,0.22);overflow:hidden">
<div class="mi" style="top:4px;"><svg viewBox="0 0 24 24"><path stroke="#000" stroke-width="0.6" d="M18,16.08C17.24,16.08 16.56,16.38 16.04,16.85L8.91,12.7C8.96,12.47 9,12.24 9,12C9,11.76 8.96,11.53 8.91,11.3L15.96,7.19C16.5,7.69 17.21,8 18,8A3,3 0 0,0 21,5A3,3 0 0,0 18,2A3,3 0 0,0 15,5C15,5.24 15.04,5.47 15.09,5.7L8.04,9.81C7.5,9.31 6.79,9 6,9A3,3 0 0,0 3,12A3,3 0 0,0 6,15C6.79,15 7.5,14.69 8.04,14.19L15.16,18.34C15.11,18.55 15.08,18.77 15.08,19C15.08,20.61 16.39,21.91 18,21.91C19.61,21.91 20.92,20.61 20.92,19A2.92,2.92 0 0,0 18,16.08Z"/></svg><span>ファイルを共有</span></div>
<div class="mi" style="top:70px;"><svg viewBox="0 0 24 24"><path d="M12,17.27L18.18,21L16.54,13.97L22,9.24L14.81,8.62L12,2L9.19,8.62L2,9.24L7.45,13.97L5.82,21L12,17.27Z" fill="#fc0"/></svg><span>お気に入りに追加</span></div>
<div class="mi" style="top:136px;"><svg viewBox="0 0 24 24"><circle cx="12" cy="4.5" r="2.3"/><path d="M8.5 9H13.5V18H16V21H8V18H10.5V12H8.5Z"/></svg><span>詳細</span></div>
<div class="mi" style="top:202px;"><svg viewBox="0 0 24 24"><path d="M20.71,7.04C21.1,6.65 21.1,6 20.71,5.63L18.37,3.29C18,2.9 17.35,2.9 16.96,3.29L15.12,5.12L18.87,8.87M3,17.25V21H6.75L17.81,9.93L14.06,6.18L3,17.25Z"/></svg><span>名前の変更</span></div>
<div class="mi" style="top:268px;"><svg viewBox="0 0 24 24"><path d="M3 6H11V8.6H5.6V18.4H15.4V13H18V21H3Z"/><path d="M13 3H21V11L18.2 8.2L12.6 13.8L10.2 11.4L15.8 5.8Z"/></svg><span>移動またはコピー</span></div>
<div class="mi" style="top:334px;"><svg viewBox="0 0 24 24"><path d="M9.7 3H14.3V11H20.5L12 20.5L3.5 11H9.7Z"/></svg><span>ダウンロード</span></div>
<div class="mi" style="top:400px;background:#f5f5f5;"><svg viewBox="0 0 24 24"><path d="M9,2.5H15V4H20V6.5H4V4H9Z M5,8H19L17.5,21.5H6.5Z"/></svg><span>ファイルを削除</span></div>
</div>
<div class="abs" style="left:704px;top:831px;width:276px;height:75px;border:8px solid #ec1c24"></div>
</body></html>
